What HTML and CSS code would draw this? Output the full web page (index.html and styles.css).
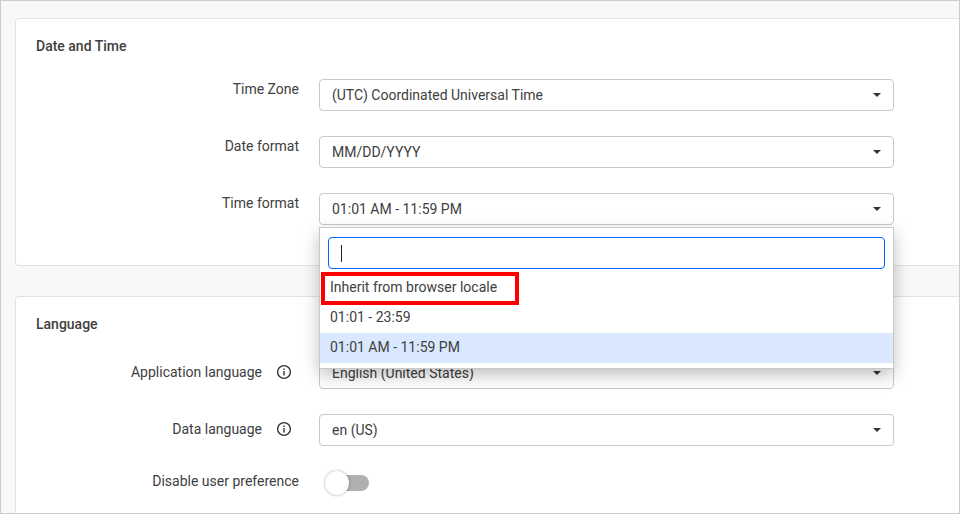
FILE: index.html
```html
<!DOCTYPE html>
<html lang="en">
<head>
<meta charset="utf-8">
<title>Regional settings</title>
<link rel="stylesheet" href="styles.css">
</head>
<body>
<main class="page">
  <section class="card">
    <h2 class="card-title">Date and Time</h2>
    <div class="field">
      <label class="label" for="time-zone">Time Zone</label>
      <div class="control">
        <select id="time-zone" class="select"><option>(UTC) Coordinated Universal Time</option></select>
        <svg class="arrow" viewBox="0 0 8 4" aria-hidden="true"><path d="M0 0h8L4 4z"/></svg>
      </div>
    </div>
    <div class="field">
      <label class="label" for="date-format">Date format</label>
      <div class="control">
        <select id="date-format" class="select"><option>MM/DD/YYYY</option></select>
        <svg class="arrow" viewBox="0 0 8 4" aria-hidden="true"><path d="M0 0h8L4 4z"/></svg>
      </div>
    </div>
    <div class="field">
      <label class="label" for="time-format">Time format</label>
      <div class="control">
        <select id="time-format" class="select"><option>01:01 AM - 11:59 PM</option></select>
        <svg class="arrow" viewBox="0 0 8 4" aria-hidden="true"><path d="M0 0h8L4 4z"/></svg>
        <div class="dropdown">
          <div class="search">
            <input class="search-input" type="text" aria-label="Search time formats">
            <span class="caret"></span>
          </div>
          <ul class="options" role="listbox" aria-label="Time format">
            <li class="option" role="option">Inherit from browser locale<span class="highlight"></span></li>
            <li class="option" role="option">01:01 - 23:59</li>
            <li class="option selected" role="option" aria-selected="true">01:01 AM - 11:59 PM</li>
          </ul>
        </div>
      </div>
    </div>
  </section>

  <section class="card">
    <h2 class="card-title">Language</h2>
    <div class="field">
      <div class="label label-info">
        <label for="app-language">Application language</label>
        <button class="info" type="button" aria-label="About application language">
          <svg viewBox="0 0 16 16" aria-hidden="true"><circle cx="8" cy="8" r="6.4"/><path d="M8 7v4.5M8 4.5V6"/></svg>
        </button>
      </div>
      <div class="control">
        <select id="app-language" class="select"><option>English (United States)</option></select>
        <svg class="arrow" viewBox="0 0 8 4" aria-hidden="true"><path d="M0 0h8L4 4z"/></svg>
      </div>
    </div>
    <div class="field">
      <div class="label label-info">
        <label for="data-language">Data language</label>
        <button class="info" type="button" aria-label="About data language">
          <svg viewBox="0 0 16 16" aria-hidden="true"><circle cx="8" cy="8" r="6.4"/><path d="M8 7v4.5M8 4.5V6"/></svg>
        </button>
      </div>
      <div class="control">
        <select id="data-language" class="select"><option>en (US)</option></select>
        <svg class="arrow" viewBox="0 0 8 4" aria-hidden="true"><path d="M0 0h8L4 4z"/></svg>
      </div>
    </div>
    <div class="field">
      <label class="label" for="disable-preference">Disable user preference</label>
      <div class="control">
        <input id="disable-preference" class="switch" type="checkbox" role="switch">
      </div>
    </div>
  </section>
</main>
</body>
</html>
```
FILE: styles.css
```css
* {
  box-sizing: border-box;
}

body {
  margin: 0;
  color: #404040;
  font: 14px/20px Roboto, sans-serif;
}

.page {
  display: flex;
  flex-direction: column;
  gap: 30px;
  height: 100vh;
  padding: 17px 0 0 14px;
  overflow: hidden;
  border: 1px solid #ccc;
  background: #f8f8f8;
}

.card {
  flex: none;
  padding: 17px 65px 40px 20px;
  border: 1px solid #e2e2e2;
  border-right: 0;
  border-radius: 4px 0 0 4px;
  background: #fff;
}

.card-title {
  margin: 0 0 23px;
  font-size: 14px;
  font-weight: 500;
  line-height: 20px;
}

.field {
  display: grid;
  grid-template-columns: 263px 1fr;
  column-gap: 20px;
  align-items: start;
}

.field + .field {
  margin-top: 25px;
}

.field > .label {
  display: flex;
  justify-content: flex-end;
  align-items: center;
  gap: 14px;
}

.field > .label-info {
  padding-top: 5px;
}

.control {
  position: relative;
}

.select {
  display: block;
  width: 100%;
  height: 32px;
  padding: 0 32px 0 12px;
  appearance: none;
  border: 1px solid #c8c8c8;
  border-radius: 4px;
  background: #fff;
  color: inherit;
  font: inherit;
}

.arrow {
  position: absolute;
  top: 14px;
  right: 13px;
  width: 8px;
  height: 4px;
  fill: #333;
  pointer-events: none;
}

.dropdown {
  position: absolute;
  z-index: 2;
  top: 34px;
  left: 0;
  right: 0;
  padding: 9px 0 5px;
  border: 1px solid #c8c8c8;
  background: #fff;
  box-shadow: 0 6px 16px rgba(0, 0, 0, 0.25);
}

.search {
  position: relative;
  margin: 0 8px 4px;
}

.search-input {
  display: block;
  width: 100%;
  height: 32px;
  padding: 0 12px;
  border: 1px solid #06f;
  border-radius: 4px;
  outline: 0;
  font: inherit;
}

.caret {
  position: absolute;
  top: 8px;
  left: 13px;
  width: 1px;
  height: 17px;
  background: #222;
}

.options {
  margin: 0;
  padding: 0;
  list-style: none;
}

.option {
  position: relative;
  padding: 4px 10px 6px;
}

.selected {
  background: #d9e8ff;
}

.highlight {
  position: absolute;
  top: -1px;
  left: 1px;
  width: 198px;
  height: 33px;
  border: 4px solid #f00;
}

.info {
  display: block;
  width: 16px;
  height: 16px;
  margin-right: 7px;
  padding: 0;
  border: 0;
  background: none;
}

.info svg {
  display: block;
  fill: none;
  stroke: #333;
  stroke-width: 1.4;
}

.switch {
  position: relative;
  display: block;
  width: 40px;
  height: 16px;
  margin: 4px 0 0 10px;
  appearance: none;
  border-radius: 8px;
  background: #b0b0b0;
}

.switch::before {
  content: "";
  position: absolute;
  top: -4px;
  left: -4px;
  width: 24px;
  height: 24px;
  border-radius: 50%;
  background: #fff;
  box-shadow: 0 0 3px rgba(0, 0, 0, 0.35);
}
```
